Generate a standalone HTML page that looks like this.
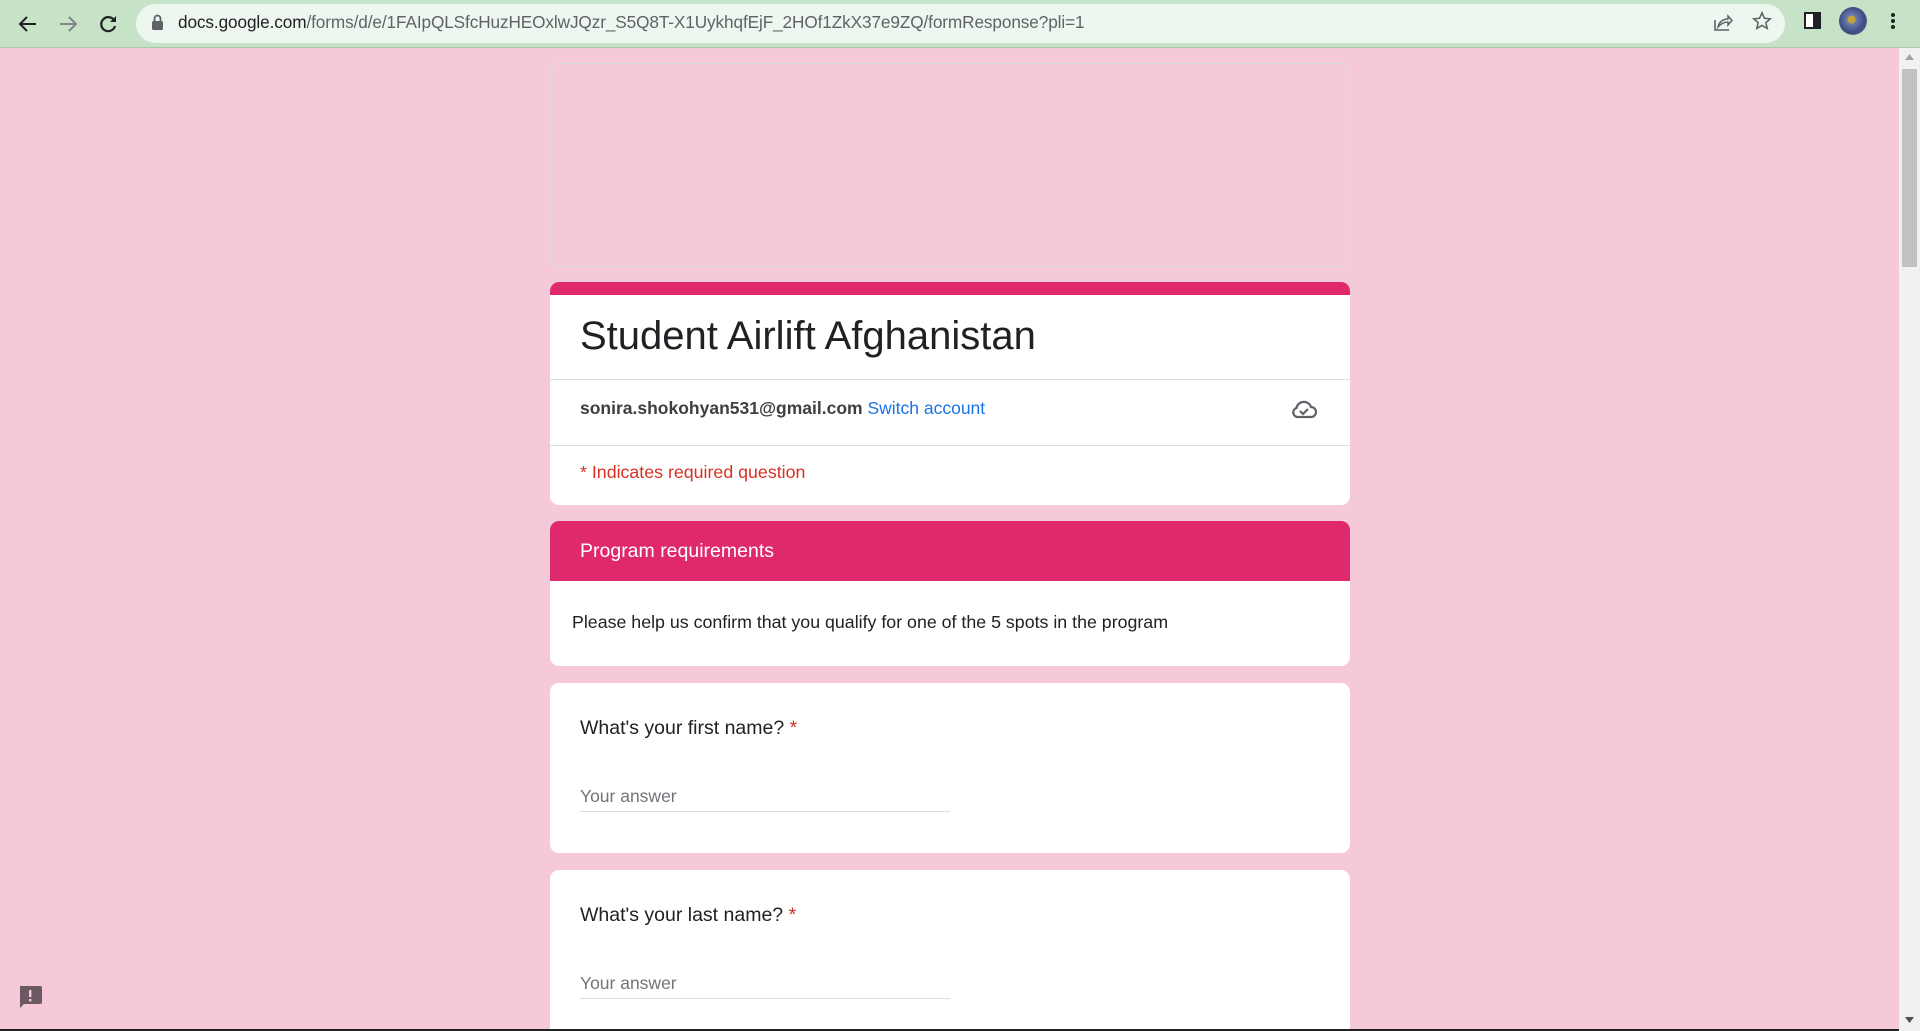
<!DOCTYPE html>
<html><head><meta charset="utf-8"><style>
*{box-sizing:border-box;margin:0;padding:0}
html,body{width:1920px;height:1031px;overflow:hidden}
body{background:#f6c9d8;font-family:"Liberation Sans",sans-serif}
#wrap{position:relative;width:1920px;height:1031px;overflow:hidden}
.chrome{position:absolute;left:0;top:0;width:1920px;height:48px;background:#c6e3c8;border-bottom:1px solid #a9c7ab}
.pill{position:absolute;left:136px;top:4px;width:1649px;height:39px;border-radius:20px;background:#eef7ef}
.url{position:absolute;left:178px;top:12px;font-size:17.2px;color:#5f6368;white-space:nowrap;letter-spacing:-0.1px}
.url b{font-weight:normal;color:#202124}
.ico{position:absolute}
.card{position:absolute;left:550px;width:800px;background:#fff;border-radius:9px;overflow:hidden}
.t{position:absolute;white-space:nowrap}
.sb{position:absolute;left:1899px;top:48px;width:21px;height:983px;background:#f1f1f1}
</style></head><body><div id="wrap">
<div class="chrome">
  <svg class="ico" style="left:16px;top:12px" width="24" height="24" viewBox="0 0 24 24"><path d="M20 12H5M11 5l-7 7 7 7" stroke="#202124" stroke-width="2" fill="none"/></svg>
  <svg class="ico" style="left:56px;top:12px" width="24" height="24" viewBox="0 0 24 24"><path d="M4 12h15M13 5l7 7-7 7" stroke="#80868b" stroke-width="2" fill="none"/></svg>
  <svg class="ico" style="left:96px;top:12px" width="24" height="24" viewBox="0 0 24 24"><path d="M18.5 9A7 7 0 1 0 19 14" stroke="#202124" stroke-width="2.2" fill="none"/><path d="M20 4v6h-6z" fill="#202124"/></svg>
  <div class="pill"></div>
  <svg class="ico" style="left:151px;top:14px" width="13" height="17" viewBox="0 0 13 17"><rect x="1" y="7" width="11" height="9" rx="1.5" fill="#5f6368"/><path d="M3.5 7V4.5a3 3 0 0 1 6 0V7" stroke="#5f6368" stroke-width="1.8" fill="none"/></svg>
  <div class="url"><b>docs.google.com</b>/forms/d/e/1FAIpQLSfcHuzHEOxlwJQzr_S5Q8T-X1UykhqfEjF_2HOf1ZkX37e9ZQ/formResponse?pli=1</div>
  <svg class="ico" style="left:1712px;top:11px" width="22" height="22" viewBox="0 0 22 22"><path d="M3 9v10h14" stroke="#5f6368" stroke-width="1.6" fill="none"/><path d="M6 16c1-5 5-8 10-8V5l4 4.5-4 4.5v-3c-4 0-7 1.5-10 5z" stroke="#5f6368" stroke-width="1.5" fill="none"/></svg>
  <svg class="ico" style="left:1751px;top:10px" width="22" height="22" viewBox="0 0 24 24"><path d="M12 3l2.7 6 6.3.6-4.8 4.2 1.5 6.3L12 16.8 6.3 20.1l1.5-6.3L3 9.6 9.3 9z" stroke="#5f6368" stroke-width="1.7" fill="none"/></svg>
  <div class="ico" style="left:1804px;top:12px;width:17px;height:17px;border:2.5px solid #202124;background:linear-gradient(90deg,#fff 55%,#202124 55%)"></div>
  <div class="ico" style="left:1839px;top:7px;width:28px;height:28px;border-radius:50%;background:radial-gradient(circle at 45% 45%,#c9a13a 0 18%,#6a7fb2 19%,#3c4a80 60%,#8d8fae 100%)"></div>
  <div class="ico" style="left:1891px;top:13px;width:4px;height:4px;border-radius:50%;background:#202124;box-shadow:0 6px 0 #202124,0 12px 0 #202124"></div>
</div>

<div style="position:absolute;left:550px;top:63px;width:800px;height:204px;border:1px solid #dcdcdc;border-radius:9px"></div>

<div class="card" style="top:282px;height:223px">
  <div style="height:13px;background:#e0296c"></div>
  <div class="t" style="left:30px;top:32px;font-size:40px;color:#202124">Student Airlift Afghanistan</div>
  <div style="position:absolute;left:0;top:97px;width:800px;height:1px;background:#dadce0"></div>
  <div class="t" style="left:30px;top:116px;font-size:17.5px;color:#5f6368"><b style="color:#3c4043">sonira.shokohyan531@gmail.com</b> <span style="color:#1a73e8">Switch account</span></div>
  <svg class="ico" style="left:740px;top:114px" width="28" height="26" viewBox="0 0 28 26"><path d="M8 21h13a5 5 0 0 0 0-10 7.5 7.5 0 0 0-14.5 1A4.6 4.6 0 0 0 8 21z" stroke="#5f6368" stroke-width="2.2" fill="none"/><path d="M10 15l3 3 5-5" stroke="#5f6368" stroke-width="2.2" fill="none"/></svg>
  <div style="position:absolute;left:0;top:163px;width:800px;height:1px;background:#dadce0"></div>
  <div class="t" style="left:30px;top:180px;font-size:17.8px;color:#d93025">* Indicates required question</div>
</div>

<div class="card" style="top:521px;height:145px">
  <div style="height:60px;background:#e0296c"></div>
  <div class="t" style="left:30px;top:19px;font-size:19.5px;color:#fff">Program requirements</div>
  <div class="t" style="left:22px;top:91px;font-size:17.8px;color:#202124">Please help us confirm that you qualify for one of the 5 spots in the program</div>
</div>

<div class="card" style="top:683px;height:170px">
  <div class="t" style="left:30px;top:34px;font-size:19.5px;color:#202124">What's your first name? <span style="color:#d93025">*</span></div>
  <div class="t" style="left:30px;top:103px;font-size:17.5px;color:#70757a">Your answer</div>
  <div style="position:absolute;left:30px;top:128px;width:370px;height:1px;background:#dadce0"></div>
</div>

<div class="card" style="top:870px;height:161px;border-bottom-left-radius:0;border-bottom-right-radius:0">
  <div class="t" style="left:30px;top:34px;font-size:19.5px;color:#202124">What's your last name? <span style="color:#d93025">*</span></div>
  <div class="t" style="left:30px;top:103px;font-size:17.5px;color:#70757a">Your answer</div>
  <div style="position:absolute;left:30px;top:128px;width:370px;height:1px;background:#dadce0"></div>
</div>

<div style="position:absolute;left:0;top:1029px;width:1899px;height:2px;background:#202124"></div>

<svg class="ico" style="left:16px;top:982px" width="28" height="28" viewBox="0 0 28 28"><path d="M4 4h20a2 2 0 0 1 2 2v14a2 2 0 0 1-2 2H8l-4 4z" fill="#6b5a63"/><rect x="13" y="8" width="2.4" height="7" fill="#f6c9d8"/><rect x="13" y="17" width="2.4" height="2.4" fill="#f6c9d8"/></svg>

<div class="sb">
  <svg class="ico" style="left:6px;top:6px" width="9" height="6" viewBox="0 0 9 6"><path d="M0 6L4.5 0 9 6z" fill="#a3a3a3"/></svg>
  <div class="ico" style="left:3px;top:21px;width:15px;height:198px;background:#c1c1c1"></div>
  <svg class="ico" style="left:6px;top:969px" width="9" height="6" viewBox="0 0 9 6"><path d="M0 0L4.5 6 9 0z" fill="#505050"/></svg>
</div>
</div></body></html>
